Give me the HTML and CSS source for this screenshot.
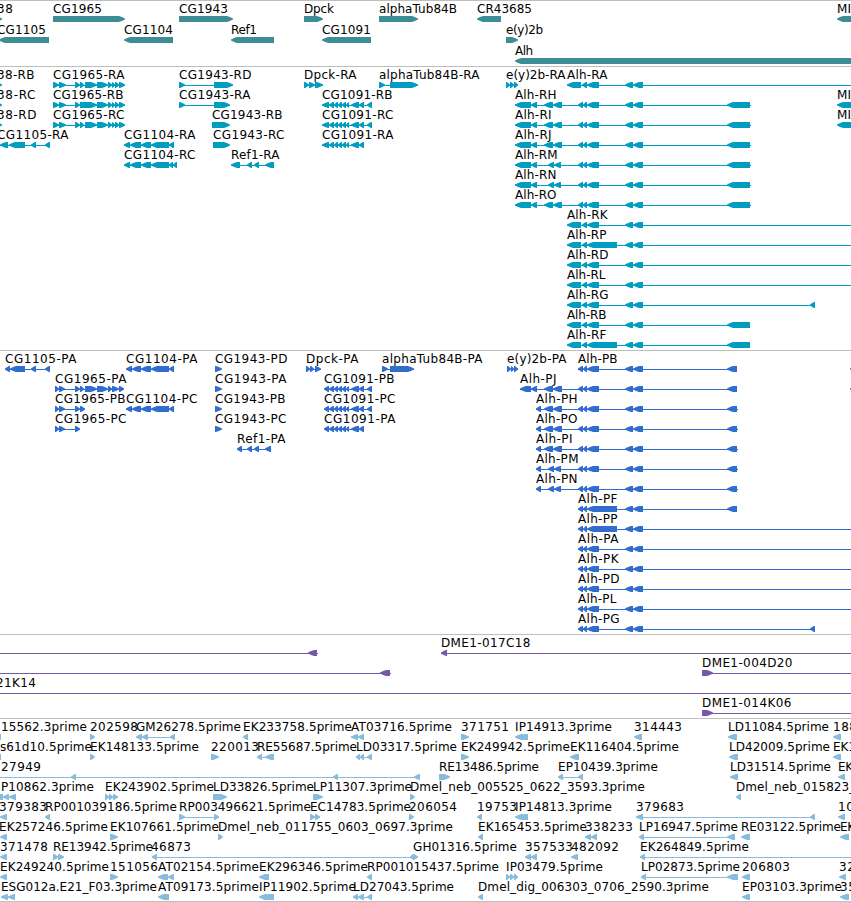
FILE: index.html
```
<!DOCTYPE html>
<html lang="en">
<head>
    <meta charset="UTF-8">
    <meta name="viewport" content="width=device-width, initial-scale=1.0">
    <title>Genome Browser</title>
    <link rel="stylesheet" href="styles.css">
</head>
<body>
    <main class="browser">
        <svg class="track genes" id="genes"></svg>
        <svg class="track transcripts" id="transcripts"></svg>
        <svg class="track proteins" id="proteins"></svg>
        <svg class="track bacs" id="bacs"></svg>
        <svg class="track ests" id="ests"></svg>
    </main>
    <script src="script.js"></script>
</body>
</html>
```
FILE: styles.css
```
body {
    margin: 0;
    background-color: #fff;
    overflow: hidden;
}

.browser {
    display: flex;
    flex-direction: column;
    width: 851px;
    height: 901px;
    border-bottom: 1px solid #bebebe;
}

.track {
    display: block;
    box-sizing: border-box;
    width: 851px;
    flex: none;
    border-top: 1px solid #bebebe;
    overflow: hidden;
}

.track text {
    font-family: "DejaVu Sans", sans-serif;
    font-size: 12px;
    fill: #000;
    white-space: pre;
}

.genes {
    height: 66px;
    color: #3d8d94;
}

.transcripts {
    height: 284px;
    color: #009dc0;
}

.proteins {
    height: 284px;
    color: #306dce;
}

.bacs {
    height: 84px;
    color: #7558a8;
}

.ests {
    height: 183px;
    color: #88bcdd;
}

.exon,
.intron {
    fill: currentColor;
}

.intron {
    shape-rendering: crispEdges;
}
```
FILE: script.js
```
var SVG_NS = 'http://www.w3.org/2000/svg';

// Label advance widths, in pixels
var ADVANCE = {
    A: 8, B: 7, C: 8, D: 9, E: 7, F: 7, G: 9, H: 9, I: 4, J: 4, K: 8, L: 6, M: 10, N: 9, O: 9,
    P: 7, R: 7, S: 7, T: 7, a: 7, c: 6, d: 8, e: 7, f: 4, g: 8, h: 7, i: 3, k: 7, l: 3, m: 11,
    n: 8, p: 8, r: 5, s: 6, u: 8, b: 8, y: 6, '(': 4, ')': 4, '-': 7.5, '.': 4, '_': 6
};

// Exon runs shared by several transcripts
var CG1965_END = ' 97-108 108-112 112-115 115-119 119-125';
var CG1091 = ' 329-334 334-338 338-342 342-346 346-349 351-359 359-364';
var ALH_MID = ' 625-633 633-643';
var ALH_TAIL = ' 578-583 583-587 587-599' + ALH_MID;
var ALH_RK = '567-581 582-587 587-599' + ALH_MID;
var ALH_RP = '567-581 582-587 587-617' + ALH_MID;
var ALH_RH = '515-531 531-537 544-553 553-562' + ALH_TAIL + ' 727-750';
var ALH_RM = '515-531 531-537 548-554 554-561' + ALH_TAIL + ' 727-750';
var ALH_PH = '536-541 544-553 553-562' + ALH_TAIL + ' 727-737';
var ALH_PM = '536-541 548-554 554-561' + ALH_TAIL + ' 727-737';

// Feature: [label, label x, strand, exons, line (when longer than the exons)]
var genes = [
    [
        ['38', -3, '+', '-10-2'], ['CG1965', 53, '+', '53-125'], ['CG1943', 179, '+', '179-233'],
        ['Dpck', 304, '+', '304-323'], ['alphaTub84B', 379, '+', '379-418'],
        ['CR43685', 477, '-', '477-501'], ['MI', 837, '-', '837-880']
    ],
    [
        ['CG1105', -3, '-', '-1-49'], ['CG1104', 124, '-', '124-173'], ['Ref1', 231, '-', '231-274'],
        ['CG1091', 322, '-', '322-371'], ['e(y)2b', 506, '+', '506-518']
    ],
    [['Alh', 515, '-', '515-880']]
];

var transcripts = [
    [
        ['38-RB', -3, '+', '-4-2'],
        ['CG1965-RA', 53, '+', '53-59 59-66 75-80 80-84 85-97' + CG1965_END],
        ['CG1943-RD', 179, '+', '179-185 214-233'],
        ['Dpck-RA', 304, '+', '304-309 309-315 315-323'],
        ['alphaTub84B-RA', 379, '+', '379-385 390-418'],
        ['e(y)2b-RA', 506, '+', '506-510 510-514 514-518'],
        ['Alh-RA', 567, '-', ALH_RK, '567-851']
    ],
    [
        ['38-RC', -3, '+', '-4-2'],
        ['CG1965-RB', 53, '+', '53-59 59-66 75-80 80-97' + CG1965_END],
        ['CG1943-RA', 179, '+', '179-185 214-230'],
        ['CG1091-RB', 322, '-', '322-329' + CG1091 + ' 367-372'],
        ['Alh-RH', 515, '-', ALH_RH, '515-751'],
        ['MI', 837, '-', '837-880']
    ],
    [
        ['38-RD', -3, '+', '-4-2'],
        ['CG1965-RC', 53, '+', '53-59 59-66 75-80 80-84 85-97' + CG1965_END],
        ['CG1943-RB', 212, '+', '212-230'],
        ['CG1091-RC', 322, '-', '322-329' + CG1091 + ' 367-372'],
        ['Alh-RI', 515, '-', ALH_RH, '515-751'],
        ['MI', 837, '-', '837-880']
    ],
    [
        ['CG1105-RA', -3, '-', '0-8 9-25 31-36 45-50'],
        ['CG1104-RA', 124, '-', '124-130 130-141 141-151 151-169 169-174'],
        ['CG1943-RC', 213, '+', '213-230'],
        ['CG1091-RA', 322, '-', '322-329' + CG1091],
        ['Alh-RJ', 515, '-', ALH_RH, '515-751']
    ],
    [
        ['CG1104-RC', 124, '-', '124-130 130-141 141-151 151-169 169-173 173-177'],
        ['Ref1-RA', 231, '-', '231-240 247-252 254-259 265-274'],
        ['Alh-RM', 515, '-', ALH_RM, '515-751']
    ],
    [['Alh-RN', 515, '-', ALH_RM, '515-751']],
    [['Alh-RO', 515, '-', ALH_RH, '515-751']],
    [['Alh-RK', 567, '-', ALH_RK, '567-851']],
    [['Alh-RP', 567, '-', ALH_RP, '567-851']],
    [['Alh-RD', 567, '-', ALH_RK, '567-851']],
    [['Alh-RL', 567, '-', ALH_RK, '567-851']],
    [['Alh-RG', 567, '-', ALH_RK + ' 810-815']],
    [['Alh-RB', 567, '-', ALH_RK + ' 727-750']],
    [['Alh-RF', 567, '-', ALH_RP + ' 727-750']]
];

var proteins = [
    [
        ['CG1105-PA', 5, '-', '5-10 10-25 31-36 45-50'],
        ['CG1104-PA', 126, '-', '126-132 132-141 141-151 151-169 169-174'],
        ['CG1943-PD', 215, '+', '215-222'],
        ['Dpck-PA', 306, '+', '306-310 310-314 315-321'],
        ['alphaTub84B-PA', 382, '+', '382-388 390-414'],
        ['e(y)2b-PA', 507, '+', '507-511 511-514 514-518'],
        ['Alh-PB', 578, '-', ALH_TAIL + ' 727-737'],
        ['', 850, '-', '850-860']
    ],
    [
        ['CG1965-PA', 55, '+', '55-59 59-65 75-80 80-84 85-97 97-108 108-112 112-119 119-124'],
        ['CG1943-PA', 215, '+', '215-222'],
        ['CG1091-PB', 324, '-', '324-329' + CG1091 + ' 367-372'],
        ['Alh-PJ', 520, '-', '520-531 531-537 544-553 553-562' + ALH_TAIL + ' 727-737'],
        ['', 850, '-', '850-860']
    ],
    [
        ['CG1965-PB', 55, '+', '55-59 59-65 75-80 80-85'],
        ['CG1104-PC', 126, '-', '126-132 132-141 141-151 151-169 169-174'],
        ['CG1943-PB', 215, '+', '215-222'],
        ['CG1091-PC', 324, '-', '324-329' + CG1091 + ' 367-372'],
        ['Alh-PH', 536, '-', ALH_PH, '536-738']
    ],
    [
        ['CG1965-PC', 55, '+', '55-59 59-65 75-80'],
        ['CG1943-PC', 215, '+', '215-222'],
        ['CG1091-PA', 324, '-', '324-329' + CG1091],
        ['Alh-PO', 536, '-', ALH_PH, '536-738']
    ],
    [
        ['Ref1-PA', 237, '-', '237-242 247-252 254-259 265-271'],
        ['Alh-PI', 536, '-', ALH_PH, '536-738']
    ],
    [['Alh-PM', 536, '-', ALH_PM, '536-738']],
    [['Alh-PN', 536, '-', ALH_PM, '536-738']],
    [['Alh-PF', 578, '-', '578-583 583-587 587-617' + ALH_MID + ' 727-737']],
    [['Alh-PP', 578, '-', '578-583 583-587 587-617' + ALH_MID, '578-851']],
    [['Alh-PA', 578, '-', ALH_TAIL, '578-851']],
    [['Alh-PK', 578, '-', ALH_TAIL, '578-851']],
    [['Alh-PD', 578, '-', ALH_TAIL, '578-851']],
    [['Alh-PL', 578, '-', ALH_TAIL, '578-851']],
    [['Alh-PG', 578, '-', ALH_TAIL + ' 810-815']]
];

var bacs = [
    [['', 0, '-', '308-317', '0-318'], ['DME1-017C18', 441, '-', '441-447', '441-851']],
    [['', 0, '-', '380-390', '0-391'], ['DME1-004D20', 702, '+', '702-713', '702-851']],
    [['21K14', -4, '-', '', '0-851']],
    [['DME1-014K06', 702, '+', '702-713', '702-851']]
];

var ests = [
    [
        ['15562.3prime', 1, '-', '-5-1'], ['202598', 90, '+', '90-95'],
        ['GM26278.5prime', 136, '-', '136-142 142-148 170-175'], ['EK233758.5prime', 243, '-', '243-248'],
        ['AT03716.5prime', 351, '-', '351-358 358-364'], ['371751', 461, '+', '461-469'],
        ['IP14913.3prime', 515, '-', '515-528'], ['314443', 634, '-', '634-642'],
        ['LD11084.5prime', 728, '-', '728-737'], ['188', 833, '-', '833-841']
    ],
    [
        ['s61d10.5prime', 0, '-', '-5-1'], ['EK148133.5prime', 90, '+', '90-95'],
        ['220013', 211, '+', '211-219'], ['RE55687.5prime', 257, '-', '257-262 265-274'],
        ['LD03317.5prime', 356, '-', '356-360 360-364 367-372'], ['EK249942.5prime', 461, '+', '461-469'],
        ['EK116404.5prime', 570, '-', '570-579'], ['LD42009.5prime', 729, '-', '729-738'],
        ['EK1', 833, '-', '833-841']
    ],
    [
        ['27949', 1, '-', '71-76 333-338 414-420', '0-420'], ['RE13486.5prime', 439, '+', '439-450'],
        ['EP10439.3prime', 558, '-', '558-563 578-583'], ['LD31514.5prime', 730, '-', '730-738'],
        ['EK', 838, '-', '838-845']
    ],
    [
        ['P10862.3prime', 1, '-', '-5-3 3-9 9-16'], ['EK243902.5prime', 105, '+', '105-109 109-113 113-118'],
        ['LD33826.5prime', 213, '+', '213-227'], ['LP11307.3prime', 313, '+', '313-323'],
        ['Dmel_neb_005525_0622_3593.3prime', 410, '+', '410-415'], ['Dmel_neb_015823_0', 736, '-', '736-741']
    ],
    [
        ['379383', -1, '-', '0-7'], ['RP001039186.5prime', 45, '-', '45-50'],
        ['RP003496621.5prime', 179, '+', '179-185 214-219'], ['EC14783.5prime', 310, '+', '310-315 315-320'],
        ['206054', 409, '+', '409-414'], ['19753', 477, '-', '477-482'],
        ['IP14813.3prime', 515, '-', '515-528'], ['379683', 636, '-', '636-643 810-815'],
        ['10', 838, '-', '838-845']
    ],
    [
        ['EK257246.5prime', -1, '-', '0-7'], ['EK107661.5prime', 110, '+', '110-118'],
        ['Dmel_neb_011755_0603_0697.3prime', 218, '+', '218-223'], ['EK165453.5prime', 478, '-', '478-483'],
        ['338233', 585, '-', '585-591 591-597'], ['LP16947.5prime', 639, '-', '639-644 727-735'],
        ['RE03122.5prime', 741, '-', '741-750'], ['EK', 840, '-', '840-849']
    ],
    [
        ['371478', 0, '-', '0-7'], ['RE13942.5prime', 53, '+', '53-58 58-64'],
        ['46873', 151, '-', '152-157 410-414'], ['GH01316.5prime', 413, '+', '413-418'],
        ['357533', 525, '-', '525-531 531-537'], ['482092', 571, '-', '571-578'],
        ['EK264849.5prime', 640, '-', '640-645', '640-851']
    ],
    [
        ['EK249240.5prime', 0, '-', '0-7'], ['151056', 110, '+', '110-118'],
        ['AT02154.5prime', 158, '-', '158-168 168-174'], ['EK296346.5prime', 259, '-', '259-269'],
        ['RP001015437.5prime', 367, '-', '367-372'], ['IP03479.5prime', 506, '+', '506-510 510-514 514-518'],
        ['LP02873.5prime', 641, '-', '641-646 727-738'], ['206803', 742, '-', '742-750'],
        ['32', 839, '-', '839-846']
    ],
    [
        ['ESG012a.E21_F03.3prime', 1, '-', '1-8 8-15'], ['AT09173.5prime', 158, '-', '158-169'],
        ['IP11902.5prime', 259, '-', '259-274'], ['LD27043.5prime', 353, '-', '353-358 358-364 367-372'],
        ['Dmel_dig_006303_0706_2590.3prime', 478, '-', '478-483'], ['EP03103.3prime', 742, '-', '742-750'],
        ['35', 840, '-', '840-849']
    ]
];

function add(parent, name, attrs) {
    var node = document.createElementNS(SVG_NS, name);
    for (var key in attrs) {
        node.setAttribute(key, attrs[key]);
    }
    parent.appendChild(node);
    return node;
}

function parseRanges(text) {
    var ranges = [];
    text.replace(/(-?\d+)-(\d+)/g, function(match, start, end) {
        ranges.push([Number(start), Number(end)]);
    });
    return ranges;
}

function labelWidth(label) {
    var width = 0;
    for (var i = 0; i < label.length; i++) {
        width += ADVANCE[label[i]] || 8;
    }
    return width;
}

// Box with a pointed end in the direction of the strand
function drawExon(svg, start, end, strand, y) {
    var head = Math.min(end - start, 7);
    var side = strand === '+' ? 1 : -1;
    var tip = strand === '+' ? end : start;
    var back = strand === '+' ? start : end;
    var neck = tip - side * Math.max(head - 1, 3);
    var mid = tip - side * head * 0.45;
    add(svg, 'polygon', {
        'class': 'exon',
        points: [
            back, y, neck, y, mid, y + 1, tip, y + 2.5,
            tip, y + 3.5, mid, y + 5, neck, y + 6, back, y + 6
        ].join(' ')
    });
}

function drawTrack(id, rows, pitch) {
    var svg = document.getElementById(id);
    rows.forEach(function(row, index) {
        var top = index * pitch;
        row.forEach(function(feature) {
            var exons = parseRanges(feature[3]);
            var line = feature[4] ? parseRanges(feature[4])[0] : [exons[0][0], exons[exons.length - 1][1]];
            if (feature[4] || exons.length > 1) {
                add(svg, 'rect', { 'class': 'intron', x: line[0], y: top + 18, width: line[1] - line[0], height: 1 });
            }
            exons.forEach(function(exon) {
                drawExon(svg, exon[0], exon[1], feature[2], top + 15);
            });
            if (feature[0]) {
                var text = add(svg, 'text', { x: feature[1], y: top + 12, textLength: labelWidth(feature[0]) });
                text.textContent = feature[0];
            }
        });
    });
}

drawTrack('genes', genes, 21);
drawTrack('transcripts', transcripts, 20);
drawTrack('proteins', proteins, 20);
drawTrack('bacs', bacs, 20);
drawTrack('ests', ests, 20);
```
